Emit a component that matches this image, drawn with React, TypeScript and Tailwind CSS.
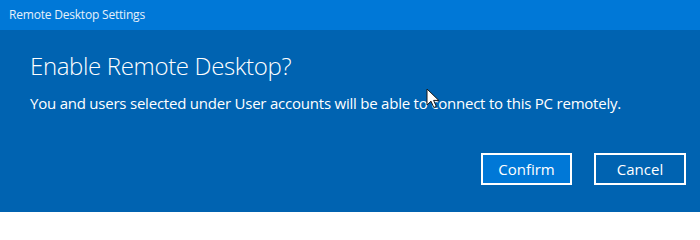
import React from "react";

function Cursor() {
  return (
    <svg
      className="absolute left-[426px] top-[88px]"
      width="14"
      height="21"
      viewBox="0 0 14 21"
    >
      <path
        d="M1 1 L1 17 L5 13.2 L7.8 19.5 L10.3 18.4 L7.6 12.4 L12.8 12.4 Z"
        fill="#ffffff"
        stroke="#1a1a1a"
        strokeWidth="1"
        strokeLinejoin="round"
      />
    </svg>
  );
}

export default function App() {
  return (
    <div
      className="relative w-[700px] h-[212px] bg-[#0063b1] flex flex-col text-white overflow-hidden"
      style={{ fontFamily: '"Open Sans", "Noto Sans", sans-serif' }}
    >
      <div className="h-[30px] bg-[#0078d7] flex items-center pl-[9px] text-[12px] tracking-[-0.2px] text-[#e6f0fa]">
        Remote Desktop Settings
      </div>
      <div className="flex flex-col pl-[30px] pr-[14px] flex-1">
        <h1 className="mt-[21px] text-[24px] font-light leading-[30px] tracking-[-0.35px]">
          Enable Remote Desktop?
        </h1>
        <p className="mt-[12px] text-[15px] leading-[20px] tracking-[-0.22px]">
          You and users selected under User accounts will be able to connect to this PC remotely.
        </p>
        <div className="flex justify-end gap-[22px] mt-[40px]">
          <button className="w-[91px] h-[32px] border-2 border-white bg-[#0078d7] text-[15px] text-white">
            Confirm
          </button>
          <button className="w-[92px] h-[32px] border-2 border-white bg-[#0063b1] text-[15px] text-white">
            Cancel
          </button>
        </div>
      </div>
      <Cursor />
    </div>
  );
}
